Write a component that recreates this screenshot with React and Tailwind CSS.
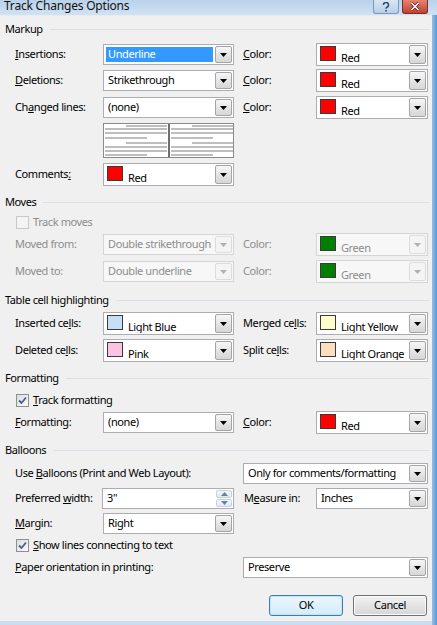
import React from "react";

const Arrow = ({ disabled }) => (
  <div
    className={`w-[17px] h-full border rounded-[2px] flex items-center justify-center ${
      disabled ? "border-[#dcdcdc] bg-[#f4f4f4]" : "border-[#a5a5a5] bg-linear-to-b from-[#f6f6f6] to-[#d6d6d6]"
    }`}
  >
    <svg width="7" height="4" viewBox="0 0 7 4">
      <path d="M0 0h7L3.5 4z" fill={disabled ? "#b0b0b0" : "#000"} />
    </svg>
  </div>
);

const Combo = ({ value, disabled, selected, w = "w-[131px]" }) => (
  <div
    className={`${w} h-[21px] flex border p-px ${
      disabled ? "border-[#d5d5d5] bg-[#f7f7f7] text-[#8d8d8d]" : "border-[#abadb3] bg-white"
    }`}
  >
    <div className="flex-1 min-w-0 flex items-stretch pr-[2px] pl-px py-px">
      <span
        className={`w-full flex items-center px-[2px] overflow-hidden ${selected ? "bg-[#3399ff] text-white" : ""}`}
      >
        {value}
      </span>
    </div>
    <Arrow disabled={disabled} />
  </div>
);

const ColorCombo = ({ value, swatch, disabled, w = "w-[112px]" }) => (
  <div
    className={`${w} h-[23px] flex border p-px ${
      disabled ? "border-[#d5d5d5] bg-[#f7f7f7] text-[#8d8d8d]" : "border-[#abadb3] bg-white"
    }`}
  >
    <div className="flex-1 min-w-0 flex items-start overflow-hidden">
      <div className={`w-[16px] h-[15px] shrink-0 mt-[1px] ml-[2px] border border-[#3a3a3a] ${swatch}`}></div>
      <span className="ml-[5px] mt-[5px] leading-[15px]">{value}</span>
    </div>
    <Arrow disabled={disabled} />
  </div>
);

const Header = ({ title, mt }) => (
  <div className={`flex items-center h-[16px] pl-[5px] pr-[3px] ${mt}`}>
    <span>{title}</span>
    <div className="flex-1 h-px bg-[#d8dfe6] ml-[7px]"></div>
  </div>
);

const Check = ({ checked, disabled, label, mt }) => (
  <div className={`flex items-center h-[16px] pl-[16px] ${mt} ${disabled ? "text-[#8d8d8d]" : ""}`}>
    <div
      className={`w-[13px] h-[13px] border flex items-center justify-center ${
        disabled ? "border-[#c8c8c8] bg-[#f4f4f4]" : "border-[#8e8f8f] bg-linear-to-br from-[#dcdcdc] to-[#fbfbfb]"
      }`}
    >
      {checked && (
        <svg width="9" height="9" viewBox="0 0 9 9">
          <path d="M1 4.5l2.5 2.5L8 1.5" stroke="#4a5f8f" strokeWidth="1.8" fill="none" />
        </svg>
      )}
    </div>
    <span className="ml-[4px]">{label}</span>
  </div>
);

const Row = ({ mt, children }) => <div className={`flex items-center h-[23px] pl-[15px] ${mt}`}>{children}</div>;

const Preview = () => {
  const half = (x0) => [
    [x0 + 21, 2, x0 + 62],
    [x0, 5, x0 + 62],
    [x0, 9, x0 + 62],
    [x0, 14, x0 + 42],
    [x0 + 21, 19, x0 + 62],
    [x0, 23, x0 + 62],
    [x0, 27, x0 + 62],
    [x0, 31, x0 + 42],
  ];
  return (
    <div className="ml-[103px] mt-[4px] w-[131px] h-[35px] border border-[#8a8a8a] bg-white">
      <svg width="129" height="33" viewBox="0 0 129 33">
        {[...half(1), ...half(67)].map(([a, y, b], i) => (
          <line key={i} x1={a} y1={y} x2={b} y2={y} stroke="#a9a9a9" strokeWidth="1.6" />
        ))}
        <line x1="65" y1="0" x2="65" y2="33" stroke="#6e6e6e" strokeWidth="2" />
      </svg>
    </div>
  );
};

export default function App() {
  return (
    <div className="w-[437px] h-[625px] flex flex-col font-['Noto_Sans',sans-serif] text-[11px] tracking-[-0.4px] whitespace-nowrap text-black bg-[#c6dbf1]">
      {/* Title bar */}
      <div className="h-[15px] flex items-start bg-linear-to-b from-[#b9d1ea] to-[#d2e2f3] overflow-hidden">
        <span className="pl-[4px] text-[12px] leading-[14px] -mt-[1px] tracking-[-0.2px] text-[#111]">Track Changes Options</span>
        <div className="flex-1"></div>
        <div className="w-[26px] h-[14px] mr-[3px] border border-t-0 border-[#7a98bd] rounded-b-[3px] bg-linear-to-b from-[#d9e6f4] to-[#b9cfe7] flex items-center justify-center">
          <svg width="8" height="10" viewBox="0 0 8 10">
            <path d="M1.5 3a2.5 2.5 0 1 1 3.5 2.2c-.8.4-1 .8-1 1.6" stroke="#2c4a70" strokeWidth="1.5" fill="none" />
            <rect x="3.2" y="8" width="1.6" height="1.6" fill="#2c4a70" />
          </svg>
        </div>
        <div className="w-[26px] h-[14px] mr-[9px] border border-t-0 border-[#7a2e26] rounded-b-[3px] bg-linear-to-b from-[#e5826f] to-[#c2402f] flex items-center justify-center">
          <svg width="10" height="9" viewBox="0 0 10 9">
            <path d="M1.5 1l7 7M8.5 1l-7 7" stroke="#5a1a12" strokeWidth="3" />
            <path d="M1.5 1l7 7M8.5 1l-7 7" stroke="#fff" strokeWidth="1.6" />
          </svg>
        </div>
      </div>

      <div className="flex flex-1">
        <div className="w-[432px] bg-[#f0f0f0] border-t border-[#e4edf6] flex flex-col">
          <Header title="Markup" mt="mt-[5px]" />
          <Row mt="mt-[6px]">
            <span className="w-[88px]"><u>I</u>nsertions:</span>
            <Combo value="Underline" selected />
            <span className="w-[73px] ml-[9px]"><u>C</u>olor:</span>
            <ColorCombo value="Red" swatch="bg-[#ff0000]" />
          </Row>
          <Row mt="mt-[3px]">
            <span className="w-[88px]"><u>D</u>eletions:</span>
            <Combo value="Strikethrough" />
            <span className="w-[73px] ml-[9px]"><u>C</u>olor:</span>
            <ColorCombo value="Red" swatch="bg-[#ff0000]" />
          </Row>
          <Row mt="mt-[4px]">
            <span className="w-[88px]">Ch<u>a</u>nged lines:</span>
            <Combo value="(none)" />
            <span className="w-[73px] ml-[9px]"><u>C</u>olor:</span>
            <ColorCombo value="Red" swatch="bg-[#ff0000]" />
          </Row>
          <Preview />
          <Row mt="mt-[5px]">
            <span className="w-[88px]">Comments<u>:</u></span>
            <ColorCombo value="Red" swatch="bg-[#ff0000]" w="w-[131px]" />
          </Row>

          <Header title="Moves" mt="mt-[8px]" />
          <Check label="Track moves" disabled mt="mt-[4px]" />
          <Row mt="mt-[3px]">
            <span className="w-[88px] text-[#8d8d8d]">Moved from:</span>
            <Combo value="Double strikethrough" disabled />
            <span className="w-[73px] ml-[9px] text-[#8d8d8d]">Color:</span>
            <ColorCombo value="Green" swatch="bg-[#008000]" disabled />
          </Row>
          <Row mt="mt-[4px]">
            <span className="w-[88px] text-[#8d8d8d]">Moved to:</span>
            <Combo value="Double underline" disabled />
            <span className="w-[73px] ml-[9px] text-[#8d8d8d]">Color:</span>
            <ColorCombo value="Green" swatch="bg-[#008000]" disabled />
          </Row>

          <Header title="Table cell highlighting" mt="mt-[9px]" />
          <Row mt="mt-[4px]">
            <span className="w-[88px]">Inserted ce<u>l</u>ls:</span>
            <ColorCombo value="Light Blue" swatch="bg-[#c6dff8]" w="w-[131px]" />
            <span className="w-[73px] ml-[9px]">Merged ce<u>l</u>ls:</span>
            <ColorCombo value="Light Yellow" swatch="bg-[#ffffcc]" />
          </Row>
          <Row mt="mt-[4px]">
            <span className="w-[88px]">Deleted ce<u>l</u>ls:</span>
            <ColorCombo value="Pink" swatch="bg-[#fbc2e2]" w="w-[131px]" />
            <span className="w-[73px] ml-[9px]">Split ce<u>l</u>ls:</span>
            <ColorCombo value="Light Orange" swatch="bg-[#fdddbd]" />
          </Row>

          <Header title="Formatting" mt="mt-[8px]" />
          <Check label={<><u>T</u>rack formatting</>} checked mt="mt-[6px]" />
          <Row mt="mt-[3px]">
            <span className="w-[88px]"><u>F</u>ormatting:</span>
            <Combo value="(none)" />
            <span className="w-[73px] ml-[9px]"><u>C</u>olor:</span>
            <ColorCombo value="Red" swatch="bg-[#ff0000]" />
          </Row>

          <Header title="Balloons" mt="mt-[8px]" />
          <Row mt="mt-[4px]">
            <span className="w-[228px]">Use <u>B</u>alloons (Print and Web Layout):</span>
            <Combo value="Only for comments/formatting" w="w-[185px]" />
          </Row>
          <Row mt="mt-[2px]">
            <span className="w-[87px]">Preferred <u>w</u>idth:</span>
            <div className="w-[132px] h-[21px] flex border border-[#abadb3] bg-white p-px">
              <span className="flex-1 flex items-center pl-[3px]">3"</span>
              <div className="w-[16px] flex flex-col gap-px">
                <div className="flex-1 border border-[#c4d2e2] rounded-[2px] bg-linear-to-b from-[#f3f7fb] to-[#dfe8f2] flex items-center justify-center">
                  <svg width="7" height="4" viewBox="0 0 7 4"><path d="M0 4h7L3.5 0z" fill="#6b7f99" /></svg>
                </div>
                <div className="flex-1 border border-[#c4d2e2] rounded-[2px] bg-linear-to-b from-[#f3f7fb] to-[#dfe8f2] flex items-center justify-center">
                  <svg width="7" height="4" viewBox="0 0 7 4"><path d="M0 0h7L3.5 4z" fill="#6b7f99" /></svg>
                </div>
              </div>
            </div>
            <span className="w-[72px] ml-[10px]">M<u>e</u>asure in:</span>
            <Combo value="Inches" w="w-[112px]" />
          </Row>
          <Row mt="mt-[2px]">
            <span className="w-[88px]"><u>M</u>argin:</span>
            <Combo value="Right" />
          </Row>
          <Check label={<><u>S</u>how lines connecting to text</>} checked mt="mt-[2px]" />
          <Row mt="mt-[3px]">
            <span className="w-[228px]"><u>P</u>aper orientation in printing:</span>
            <Combo value="Preserve" w="w-[185px]" />
          </Row>

          <div className="flex justify-end gap-[10px] pr-[5px] mt-[16px]">
            <button className="w-[74px] h-[21px] rounded-[3px] border border-[#3c7fb1] bg-linear-to-b from-[#eaf6fd] to-[#d4ecfb] shadow-[inset_0_0_0_1px_#c0e4f9]">
              OK
            </button>
            <button className="w-[74px] h-[21px] rounded-[3px] border border-[#707070] bg-linear-to-b from-[#f2f2f2] to-[#d6d6d6] shadow-[inset_0_0_0_1px_#fbfbfb]">
              Cancel
            </button>
          </div>
          <div className="flex-1"></div>
          <div className="h-[4px] bg-[#c9dcf0]"></div>
        </div>
        <div className="flex-1 border-l border-[#9fb6cf] bg-linear-to-r from-[#8ab9e6] to-[#4f97de]"></div>
      </div>
    </div>
  );
}
